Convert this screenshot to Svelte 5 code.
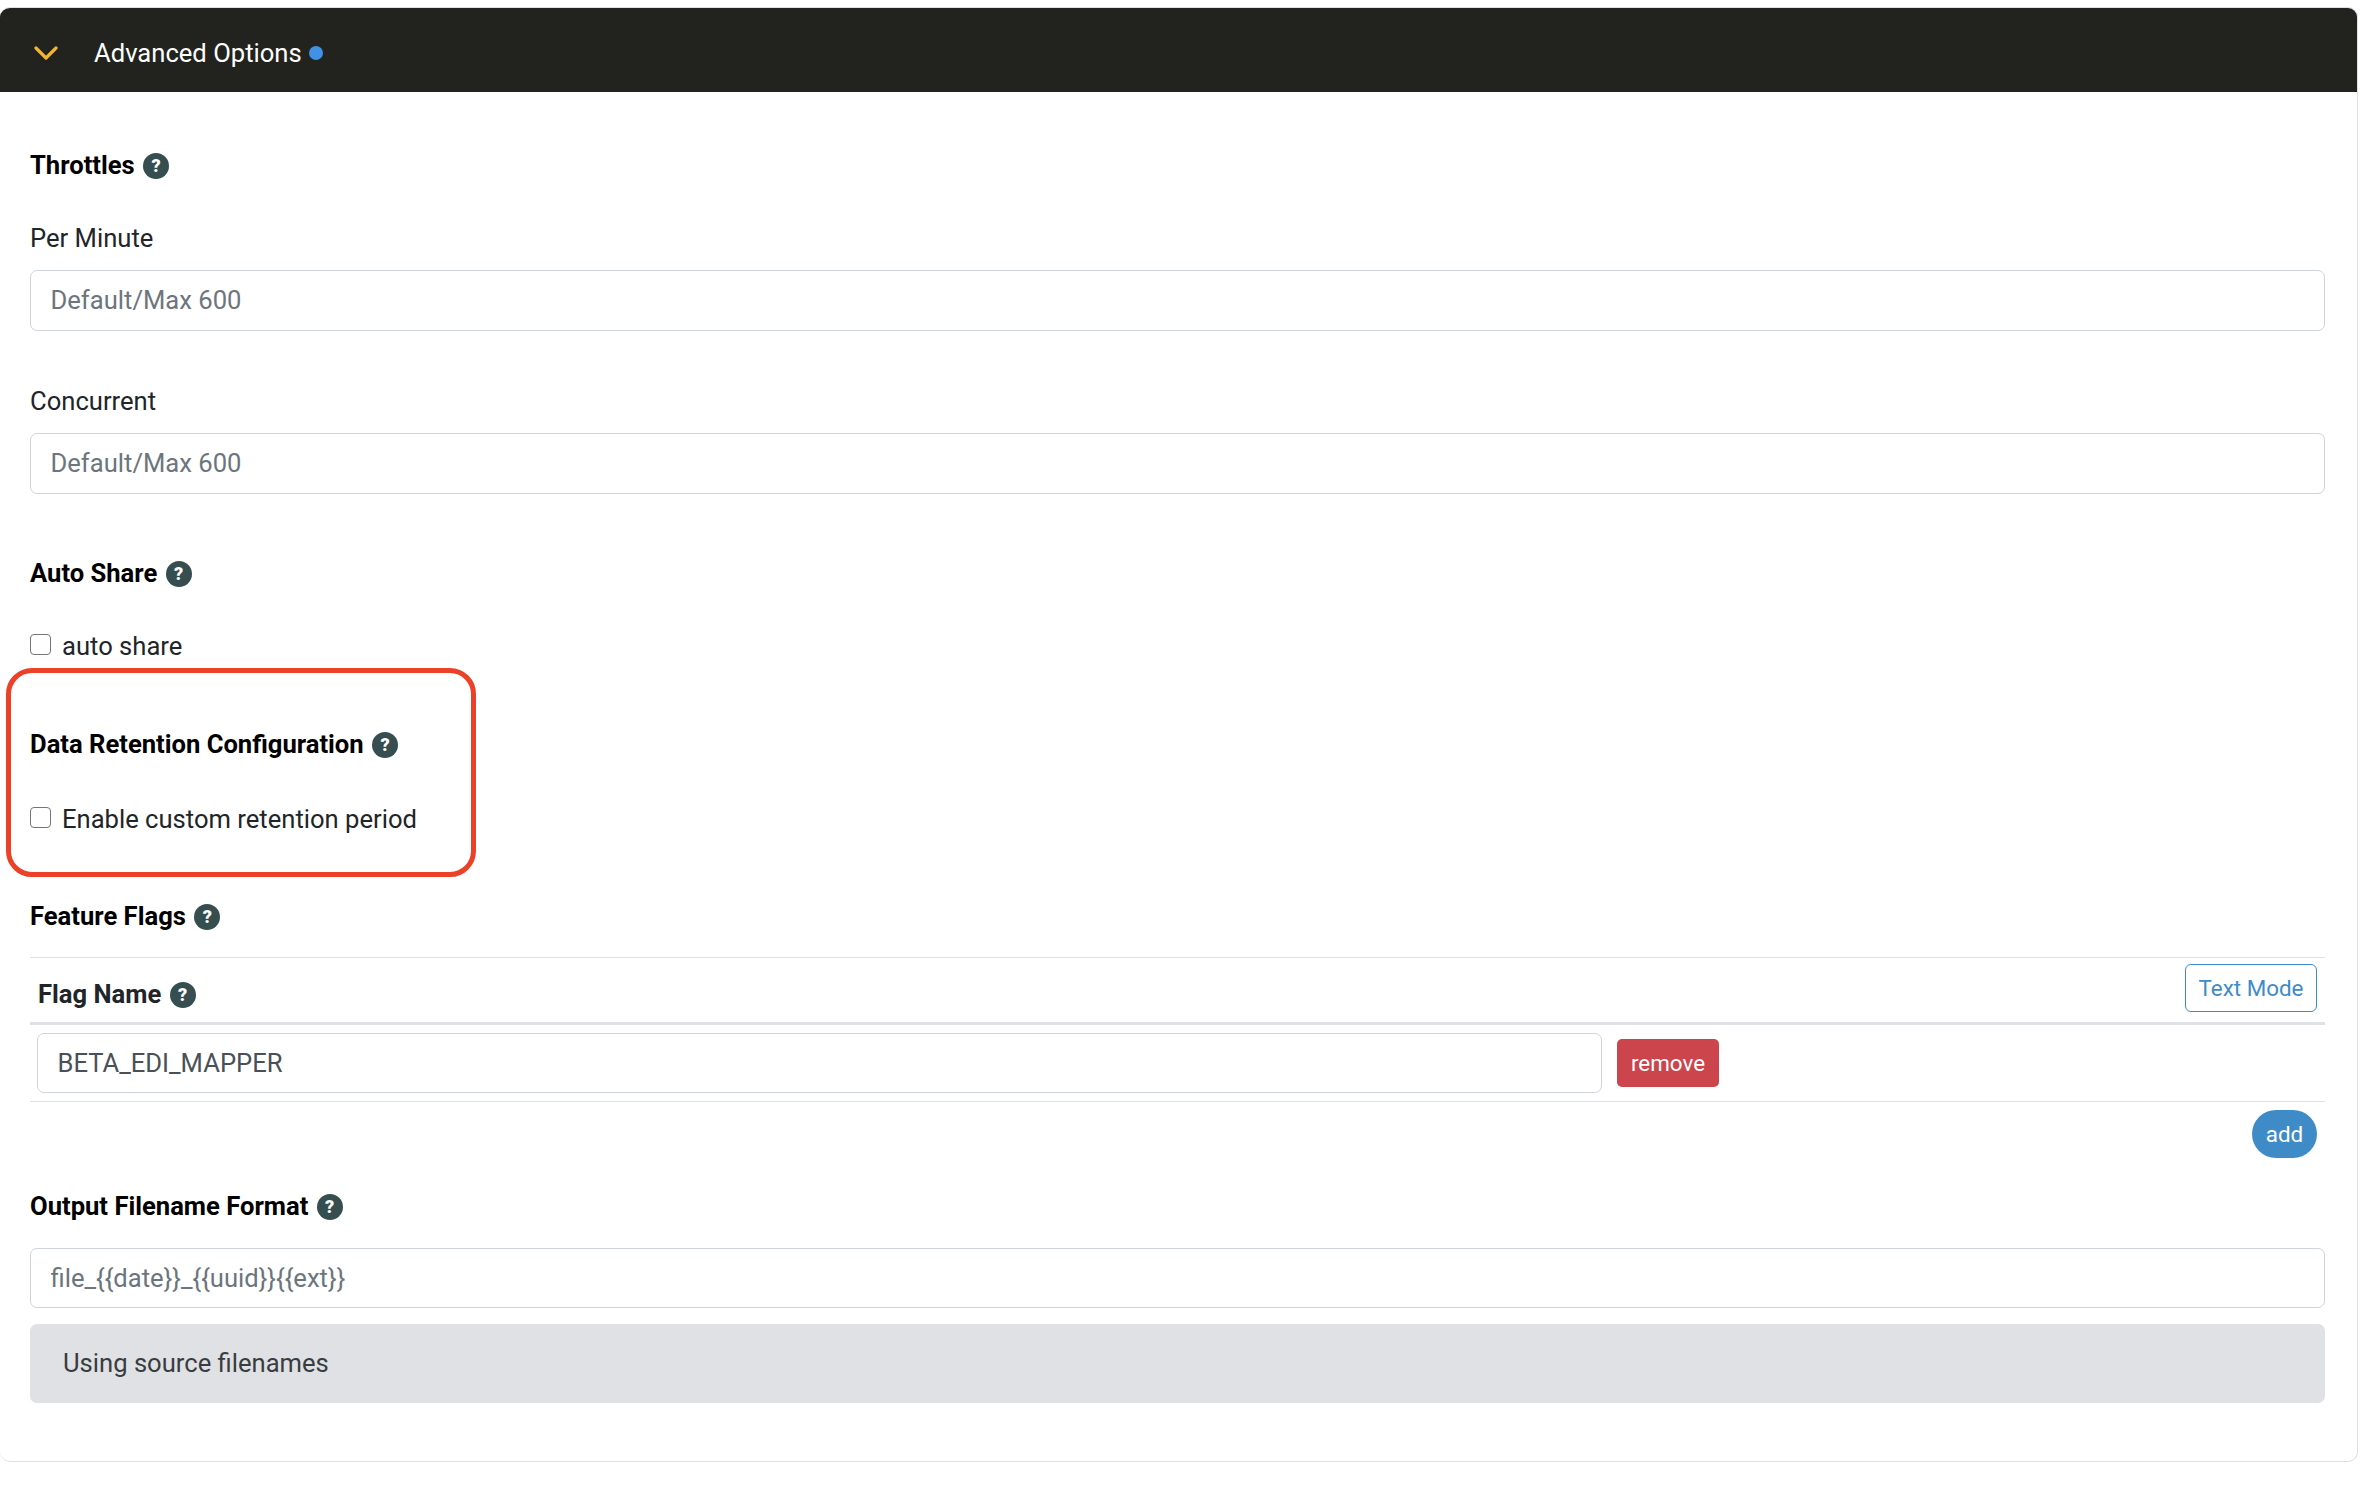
<script>
  const help = "?";
</script>

{#snippet hint()}
  <span class="hint">{help}</span>
{/snippet}

<div class="card">
  <header class="bar">
    <svg class="chev" viewBox="0 0 24 14" width="24" height="14" fill="none"><path d="M2 2l10 10L22 2" stroke="#f0b62f" stroke-width="3.2" stroke-linecap="round" stroke-linejoin="round"/></svg>
    <span class="bar-title">Advanced Options</span>
    <span class="dot"></span>
  </header>
  <div class="body">
    <h3 class="throttles">Throttles {@render hint()}</h3>
    <label class="lbl per">Per Minute</label>
    <input class="field" placeholder="Default/Max 600" />
    <label class="lbl con">Concurrent</label>
    <input class="field" placeholder="Default/Max 600" />

    <h3 class="auto">Auto Share {@render hint()}</h3>
    <label class="check c1"><input type="checkbox" /><span>auto share</span></label>

    <section class="retention">
      <div class="callout"></div>
      <h3>Data Retention Configuration {@render hint()}</h3>
      <label class="check c2"><input type="checkbox" /><span>Enable custom retention period</span></label>
    </section>

    <h3 class="flags">Feature Flags {@render hint()}</h3>
    <div class="table">
      <div class="thead">
        <span class="th">Flag Name {@render hint()}</span>
        <button class="outline">Text Mode</button>
      </div>
      <div class="trow">
        <input class="field cell" value="BETA_EDI_MAPPER" />
        <button class="danger">remove</button>
      </div>
    </div>
    <div class="addrow"><button class="add">add</button></div>

    <h3 class="output">Output Filename Format {@render hint()}</h3>
    <input class="field fname" placeholder={"file_{{date}}_{{uuid}}{{ext}}"} />
    <div class="alert">Using source filenames</div>
  </div>
</div>

<style>
  :global(body) { margin: 0; background: #fff; font-family: Roboto, sans-serif; color: #212529; }
  .card {
    margin-top: 7px; width: 2358px; height: 1455px; box-sizing: border-box;
    border: 1.5px solid #dfe0e1; border-left: 0; border-radius: 10px; overflow: hidden;
  }
  .bar { height: 84px; box-sizing: border-box; padding: 7px 0 0 34px; margin-top: -0.5px; background: #22231e; display: flex; align-items: center; }
  .chev { display: block; margin-right: 36px; }
  .bar-title { color: #fff; font-size: 25.6px; line-height: 36px; }
  .dot { width: 14px; height: 14px; border-radius: 50%; background: #3f92e6; margin-left: 7px; }
  .body { padding: 0 32px 0 30px; }
  h3 { margin: 0; font-size: 25.6px; line-height: 36px; font-weight: 700; color: #000; }
  .hint {
    display: inline-flex; width: 26px; height: 26px; border-radius: 50%; background: #364e50; color: #fff;
    font-size: 18px; font-weight: 900; align-items: center; justify-content: center; vertical-align: 2px; line-height: 1; margin-left: 2px;
  }
  .lbl { display: block; font-size: 25.6px; line-height: 36px; }
  .field {
    display: block; box-sizing: border-box; width: 100%; height: 61px; padding: 0 19.5px; border: 1.5px solid #ced4da; border-radius: 7px;
    font: 400 25.6px Roboto, sans-serif; color: #495057; background: #fff; outline: none;
  }
  .field::placeholder { color: #6c757d; opacity: 1; }
  .throttles { margin-top: 55px; }
  .per { margin-top: 37px; margin-bottom: 14px; }
  .con { margin-top: 52px; margin-bottom: 14px; }
  .auto { margin-top: 61px; }
  .check { display: flex; align-items: center; font-size: 25.6px; line-height: 36px; }
  .check input { appearance: none; width: 21px; height: 21px; margin: -3px 11px 0 0; border: 1.5px solid #767676; border-radius: 4px; background: #fff; }
  .c1 { margin-top: 37px; }
  .retention { position: relative; margin-top: 62px; }
  .callout { position: absolute; left: -24px; top: -58px; width: 470px; height: 209px; box-sizing: border-box; border: 5px solid #ea4128; border-radius: 26px; pointer-events: none; }
  .c2 { margin-top: 39px; }
  .flags { margin-top: 61px; }
  .table { margin-top: 23px; border-top: 1.5px solid #dfe0e1; }
  .thead { height: 64px; border-bottom: 3px solid #dee2e6; display: flex; align-items: center; justify-content: space-between; padding: 0 8px; }
  .th { font-size: 25.6px; font-weight: 700; margin-top: 9px; }
  .outline { height: 48px; width: 132px; padding: 0; border: 1.5px solid #3f8bc8; border-radius: 6px; color: #3f8bc8; background: #fff; font: 400 22.4px Roboto, sans-serif; margin-bottom: 4px; }
  .trow { height: 77px; box-sizing: border-box; border-bottom: 1.5px solid #dfe0e1; display: flex; align-items: center; padding: 0 7px; }
  .cell { width: 1565px; height: 60px; }
  .danger { height: 48px; width: 102px; margin-left: 15px; border: 0; border-radius: 5px; background: #cc444c; color: #fff; font: 400 22.4px Roboto, sans-serif; padding: 0; }
  .addrow { display: flex; justify-content: flex-end; padding: 8px 8px 0 0; }
  .add { width: 65px; height: 48px; border: 0; border-radius: 24px; background: #3f8bc8; color: #fff; font: 400 22.4px Roboto, sans-serif; padding: 0; }
  .output { margin-top: 30px; margin-bottom: 24px; }
  .fname { height: 60px; }
  .alert { margin-top: 16px; height: 79px; box-sizing: border-box; padding: 0 33px; display: flex; align-items: center; background: #e0e1e4; border-radius: 7px; color: #383d41; font-size: 25.6px; }
</style>
